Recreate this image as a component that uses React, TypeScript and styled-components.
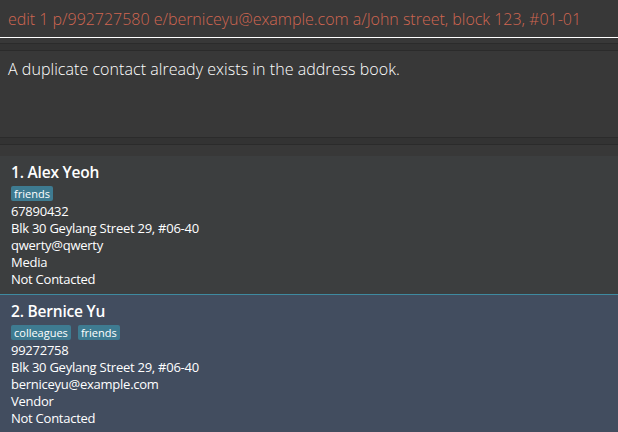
import React from "react";
import styled, { createGlobalStyle } from "styled-components";

const Global = createGlobalStyle`
  html, body { margin: 0; padding: 0; background: #383838; }
  body { width: 618px; height: 432px; overflow: hidden; font-family: "Open Sans", "Noto Sans", sans-serif; }
`;

const Page = styled.div`
  display: flex;
  flex-direction: column;
  width: 618px;
  height: 432px;
  background: #383838;
  overflow: hidden;
`;

const CommandBox = styled.div`
  height: 37px;
  border-bottom: 1px solid #ffffff;
  display: flex;
  align-items: center;
  padding-left: 8px;
  background: #383838;
`;

const CommandText = styled.span<{ $error?: boolean }>`
  color: ${(p) => (p.$error ? "#d06651" : "#ffffff")};
  font-size: 16px;
  font-weight: 300;
  letter-spacing: -0.02px;
  white-space: nowrap;
`;

const Divider = styled.div<{ $top: number }>`
  margin-top: ${(p) => p.$top}px;
  height: 6px;
  background: #333333;
  border-top: 1px solid #2b2b2b;
  border-bottom: 1px solid #2b2b2b;
`;

const ResultDisplay = styled.div`
  height: 86px;
  padding: 7px 8px 0;
  box-sizing: border-box;
  color: #ffffff;
  font-size: 16px;
  font-weight: 300;
  letter-spacing: 0.05px;
`;

const ListArea = styled.div`
  margin-top: 11px;
  flex: 1;
  display: flex;
  flex-direction: column;
`;

const Card = styled.div<{ $selected?: boolean }>`
  display: flex;
  flex-direction: column;
  padding: 5px 11px 5px;
  background: ${(p) => (p.$selected ? "#424d5f" : "#3c3e3f")};
  border-top: ${(p) => (p.$selected ? "1px solid #3e8aa0" : "none")};
  height: ${(p) => (p.$selected ? "auto" : "138px")};
  flex: ${(p) => (p.$selected ? 1 : "none")};
  box-sizing: border-box;
`;

const Name = styled.div`
  color: #ffffff;
  font-size: 15.5px;
  font-weight: 600;
  line-height: 22px;
  letter-spacing: -0.2px;
`;

const Tags = styled.div`
  display: flex;
  gap: 7px;
  margin: 3px 0 2px;
`;

const Tag = styled.span`
  background: #3e7b91;
  color: #ffffff;
  font-size: 11px;
  line-height: 13px;
  padding: 1px 3px 1px;
  border-radius: 2px;
`;

const Line = styled.div`
  color: #ffffff;
  font-size: 13px;
  line-height: 17px;
  letter-spacing: -0.25px;
`;

type Person = {
  id: number;
  name: string;
  tags: string[];
  phone: string;
  address: string;
  email: string;
  role: string;
  status: string;
  selected?: boolean;
};

const people: Person[] = [
  {
    id: 1,
    name: "Alex Yeoh",
    tags: ["friends"],
    phone: "67890432",
    address: "Blk 30 Geylang Street 29, #06-40",
    email: "qwerty@qwerty",
    role: "Media",
    status: "Not Contacted",
  },
  {
    id: 2,
    name: "Bernice Yu",
    tags: ["colleagues", "friends"],
    phone: "99272758",
    address: "Blk 30 Geylang Street 29, #06-40",
    email: "berniceyu@example.com",
    role: "Vendor",
    status: "Not Contacted",
    selected: true,
  },
];

export default function App() {
  return (
    <Page>
      <Global />
      <CommandBox>
        <CommandText $error>
          edit 1 p/992727580 e/berniceyu@example.com a/John street, block 123, #01-01
        </CommandText>
      </CommandBox>
      <Divider $top={5} />
      <ResultDisplay>A duplicate contact already exists in the address book.</ResultDisplay>
      <Divider $top={0} />
      <ListArea>
        {people.map((p) => (
          <Card key={p.id} $selected={p.selected}>
            <Name>
              {p.id}. {p.name}
            </Name>
            <Tags>
              {p.tags.map((t) => (
                <Tag key={t}>{t}</Tag>
              ))}
            </Tags>
            <Line>{p.phone}</Line>
            <Line>{p.address}</Line>
            <Line>{p.email}</Line>
            <Line>{p.role}</Line>
            <Line>{p.status}</Line>
          </Card>
        ))}
      </ListArea>
    </Page>
  );
}
